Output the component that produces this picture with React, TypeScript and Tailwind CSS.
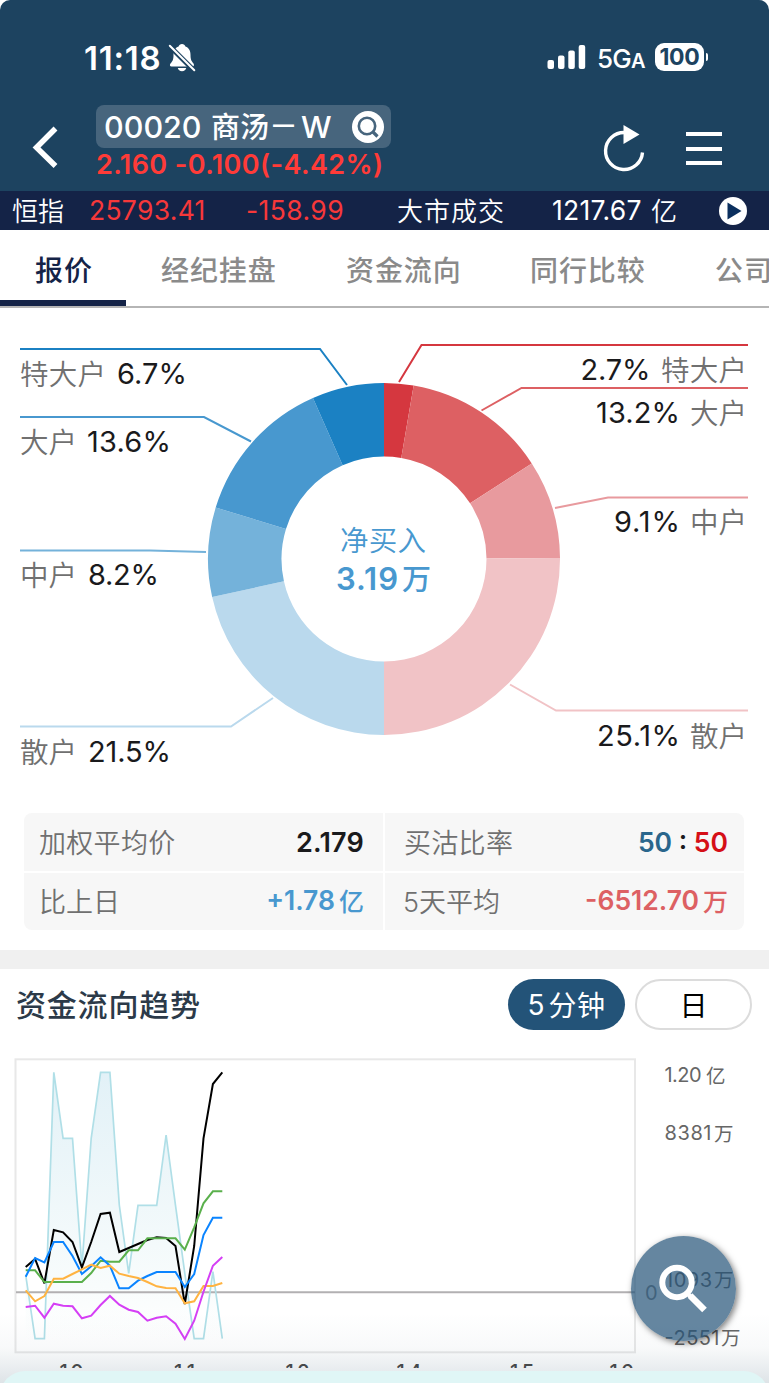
import React from "react";

const FONT = "Inter, 'Noto Sans CJK SC', sans-serif";

type TProps = {
  x: number;
  y: number;
  size: number;
  w?: number;
  fill?: string;
  weight?: number;
  children: string;
};

/** Chart label, optionally fitted to a given width. */
function Label({ x, y, size, w, fill = "#707070", weight = 400, children }: TProps) {
  return (
    <text x={x} y={y} fontSize={size} textLength={w} fill={fill} fontWeight={weight} fontFamily={FONT}>
      {children}
    </text>
  );
}

function StatusBar() {
  return (
    <div className="flex h-[105px] items-start pl-[84px] pr-[61px] pt-[38px] text-white">
      <span className="w-[84px] text-[33px] font-semibold leading-[40px] tracking-[0.8px]">11:18</span>
      <svg className="mt-[5px]" width="28" height="30" viewBox="0 0 28 30" fill="#fff">
        <path d="M14 1c1.700 0 3 1 3.400 2.500 3.700 1.300 5.100 4.600 5.100 8.200 0 5 1 6.500 3 8.700.8 1 .6 3.100-1 3.100H3.500c-1.700 0-2-2-1-3.100 2-2.200 3-3.700 3-8.700 0-3.600 1.400-6.900 5.100-8.200C11 2 12.300 1 14 1zM9.800 25h8.400c-.3 2-2 3.200-4.200 3.200S10.100 27 9.800 25z" />
        <path d="M1.500 3 26 27.500" stroke="#1d4360" strokeWidth="5" />
        <path d="M1.800 2.800 26.300 27.300" stroke="#fff" strokeWidth="2" strokeLinecap="round" />
      </svg>
      <div className="flex-1" />
      <svg className="mt-[6px]" width="40" height="27" viewBox="0 0 40 27" fill="#fff">
        <rect x="0.500" y="16" width="6.500" height="9" rx="2" />
        <rect x="11" y="11.500" width="6.500" height="13.500" rx="2" />
        <rect x="21.300" y="6.500" width="6.500" height="18.500" rx="2" />
        <rect x="31.700" y="1" width="6.500" height="24" rx="2" />
      </svg>
      <span className="ml-[10px] mt-[3px] w-[46px] whitespace-nowrap text-[26px] font-medium leading-[36px] tracking-[-0.8px]">
        5G<span className="text-[20px] font-semibold">A</span>
      </span>
      <div className="ml-[12px] mt-[5px] flex h-7 w-[49px] items-center justify-center rounded-[9px] bg-white text-[23px] font-bold tracking-[-0.3px] text-[#1d4360]">
        100
      </div>
      <div className="ml-[2px] mt-[15px] h-[8px] w-[2px] rounded-r-full bg-white" />
    </div>
  );
}

function TitleBar() {
  return (
    <div className="flex h-[86px] text-white">
      <svg className="ml-[30px] mt-[20px]" width="30" height="44" viewBox="0 0 30 44" fill="none">
        <path d="M25.500 3.500 6.500 22.500 25.500 41" stroke="#fff" strokeWidth="5.500" />
      </svg>
      <div className="ml-[36px] w-[295px]">
        <div className="flex h-[43px] items-center whitespace-nowrap rounded-[8px] bg-[#47657d] pl-[8px] pr-[7px] text-[30.500px] font-medium">
          <span className="w-[107px] tracking-[0px]">00020</span>
          <span className="pt-[2px] text-[29px] leading-[41px]">商汤</span>
          <span className="text-[29px]">－</span>
          <span className="ml-[3px]">W</span>
          <svg className="ml-auto shrink-0" width="32" height="32" viewBox="0 0 32 32" fill="none">
            <circle cx="16" cy="16" r="16" fill="#fff" />
            <circle cx="15" cy="15" r="8.200" stroke="#47657d" strokeWidth="2.600" />
            <path d="m20.500 20.500 5 5" stroke="#47657d" strokeWidth="3.200" />
          </svg>
        </div>
        <div className="whitespace-nowrap text-[27px] font-semibold leading-[34px] tracking-[0.4px] text-[#ff3b38]">
          2.160 -0.100(-4.42%)
        </div>
      </div>
      <svg className="ml-[211px] mt-[18px]" width="44" height="50" viewBox="0 0 44 50" fill="none">
        <path d="M22.500 9.500A18.500 18.500 0 1 0 40.500 29.500" stroke="#fff" strokeWidth="3.400" />
        <path d="M21.500 2v19l16-9.500z" fill="#fff" />
      </svg>
      <div className="ml-[40px] mt-[27px] flex h-[33px] w-[36px] flex-col justify-between">
        <div className="h-[4px] bg-white" />
        <div className="h-[4px] bg-white" />
        <div className="h-[4px] bg-white" />
      </div>
    </div>
  );
}

function Ticker() {
  return (
    <div className="flex h-[39px] items-center whitespace-nowrap bg-[#142347] pl-[12px] text-[26px] text-white">
      <span className="w-[77px] pt-[2px] font-[350]">恒指</span>
      <span className="w-[157px] text-[26.500px] tracking-[0.300px] text-[#f7383a]">25793.41</span>
      <span className="w-[151px] text-[26.500px] tracking-[0.400px] text-[#f7383a]">-158.99</span>
      <span className="w-[155px] pt-[2px] font-[350] tracking-[1px]">大市成交</span>
      <span className="w-[99px] text-[26.500px] tracking-[0.300px]">1217.67</span>
      <span className="w-[68px] pt-[2px] font-[350]">亿</span>
      <svg width="28" height="28" viewBox="0 0 28 28">
        <circle cx="14" cy="14" r="14" fill="#fff" />
        <path d="M8.500 5.500v17L22.500 14z" fill="#0b2f5e" />
      </svg>
    </div>
  );
}

function Tabs() {
  return (
    <div className="flex h-[78px] overflow-hidden whitespace-nowrap border-b-2 border-[#b5b5b5] text-[28px] font-medium leading-[82px] tracking-[0.9px] text-[#8a8a8a]">
      <div className="h-[76px] w-[126px] shrink-0 border-b-[6px] border-[#142347] pl-[35px] font-medium text-[#142347]">
        报价
      </div>
      <span className="ml-[35px] w-[185px] shrink-0">经纪挂盘</span>
      <span className="w-[184px] shrink-0">资金流向</span>
      <span className="w-[185px] shrink-0">同行比较</span>
      <span className="shrink-0">公司</span>
    </div>
  );
}

const CX = 384;
const CY = 251;

function arc(from: number, to: number) {
  const R = 176;
  const r = 102.5;
  const p = (rad: number, deg: number) => {
    const t = (deg * Math.PI) / 180;
    return `${(CX + rad * Math.sin(t)).toFixed(2)} ${(CY - rad * Math.cos(t)).toFixed(2)}`;
  };
  return `M${p(R, from)}A${R} ${R} 0 0 1 ${p(R, to)}L${p(r, to)}A${r} ${r} 0 0 0 ${p(r, from)}Z`;
}

const SLICES: [number, number, string][] = [
  [0, 9.7, "#d5373f"],
  [9.7, 57.1, "#dd6063"],
  [57.1, 89.7, "#e89a9e"],
  [89.7, 180, "#f1c3c6"],
  [180, 257.5, "#bad9ed"],
  [257.5, 287, "#74b2da"],
  [287, 336.2, "#4898cf"],
  [336.2, 360, "#1b81c3"],
];

const LEADERS: [string, string][] = [
  ["20,41 320,41 347,77", "#1b81c3"],
  ["20,109 204,109 251,133.500", "#4898cf"],
  ["20,242.500 150,242.500 206,244", "#74b2da"],
  ["20,418.500 231,418.500 273,390", "#bad9ed"],
  ["748,37 421.500,37 399,74", "#d5373f"],
  ["748,80 521.500,80 481.500,102.500", "#dd6063"],
  ["748,189.500 608,189.500 555,200", "#e89a9e"],
  ["748,402.500 556,402.500 510,376.500", "#f1c3c6"],
];

const INK = "#1a1a1c";

function Donut() {
  return (
    <svg className="block" width="769" height="505" viewBox="0 0 769 505">
      {SLICES.map(([a, b, c]) => (
        <path key={c} d={arc(a, b)} fill={c} />
      ))}
      {LEADERS.map(([p, c]) => (
        <polyline key={c} points={p} fill="none" stroke={c} strokeWidth="2" />
      ))}
      <Label x={20} y={77} size={28.5} w={86} weight={350}>特大户</Label>
      <Label x={117} y={76} size={29} w={70} fill={INK}>6.7%</Label>
      <Label x={20} y={145} size={28.5} w={57} weight={350}>大户</Label>
      <Label x={87} y={144} size={29} w={84} fill={INK}>13.6%</Label>
      <Label x={20} y={278} size={28.5} w={57} weight={350}>中户</Label>
      <Label x={88} y={277} size={29} w={71} fill={INK}>8.2%</Label>
      <Label x={20} y={455} size={28.5} w={57} weight={350}>散户</Label>
      <Label x={88} y={454} size={29} w={83} fill={INK}>21.5%</Label>

      <Label x={580.5} y={71.5} size={29} w={70} fill={INK}>2.7%</Label>
      <Label x={661} y={73} size={28.5} w={86} weight={350}>特大户</Label>
      <Label x={596} y={114.5} size={29} w={84} fill={INK}>13.2%</Label>
      <Label x={690} y={116} size={28.5} w={57} weight={350}>大户</Label>
      <Label x={614} y={224} size={29} w={66} fill={INK}>9.1%</Label>
      <Label x={690} y={225} size={28.5} w={57} weight={350}>中户</Label>
      <Label x={597} y={437.5} size={29} w={83} fill={INK}>25.1%</Label>
      <Label x={690} y={439} size={28.5} w={57} weight={350}>散户</Label>

      <Label x={340} y={243} size={28.5} w={86} fill="#4898cf" weight={350}>净买入</Label>
      <Label x={336} y={281.5} size={31} w={62} fill="#4898cf" weight={600}>3.19</Label>
      <Label x={402} y={282} size={29} fill="#4898cf" weight={500}>万</Label>
    </svg>
  );
}

function Stats() {
  const cell = "flex items-center justify-between bg-[#f7f7f7] whitespace-nowrap";
  return (
    <div className="ml-6 mr-[25px] grid h-[117px] grid-cols-2 grid-rows-2 gap-[2px] overflow-hidden rounded-[8px] text-[27px] text-[#707070]">
      <div className={cell + " pl-[15px] pr-[19px]"}>
        <span className="pt-[4px] font-[350] tracking-[0.3px]">加权平均价</span>
        <span className="pt-[2px] text-[27px] font-semibold tracking-[0.2px] text-[#1a1a1c]">2.179</span>
      </div>
      <div className={cell + " pl-[19px] pr-[16px]"}>
        <span className="pt-[4px] font-[350] tracking-[0.3px]">买沽比率</span>
        <span className="pt-[2px] text-[26.500px] font-semibold text-[#1a1a1c]">
          <span className="text-[#2a668c]">50</span> : <span className="text-[#d50f17]">50</span>
        </span>
      </div>
      <div className={cell + " pl-[15px] pr-[19px]"}>
        <span className="pt-[4px] font-[350]">比上日</span>
        <span className="flex items-center gap-[4px] text-[26.500px] font-semibold text-[#4898cf]">
          <span>+1.78</span>
          <span className="pt-[2px] text-[25px] font-medium">亿</span>
        </span>
      </div>
      <div className={cell + " pl-[18px] pr-[16px]"}>
        <span className="pt-[4px] font-[350]">5天平均</span>
        <span className="flex items-center gap-[4px] text-[26.500px] font-semibold text-[#dd6063]">
          <span>-6512.70</span>
          <span className="pt-[2px] text-[25px] font-medium">万</span>
        </span>
      </div>
    </div>
  );
}

function TrendHeader() {
  return (
    <div className="flex h-[89px] items-start pl-[16px] pr-[17px] pt-[10px]">
      <h2 className="flex-1 text-[30px] font-medium leading-[53px] tracking-[0.8px] text-[#2c3a49]">资金流向趋势</h2>
      <button className="flex h-[51px] w-[117px] items-center justify-center gap-[4px] rounded-full bg-[#235378] text-[28px] text-white">
        <span>5</span>
        <span className="pt-[2px] tracking-[0.5px]">分钟</span>
      </button>
      <button className="ml-[10px] flex h-[51px] w-[117px] items-center justify-center rounded-full border-2 border-[#dcdcdc] pt-[2px] text-[28px] text-black">
        日
      </button>
    </div>
  );
}

const SERIES: { color: string; values: number[] }[] = [
  { color: "#000000", values: [681, 657, 730, 570, 577, 606, 682, 606, 522, 518, 636, 624, 612, 600, 592, 594, 618, 792, 618, 295, 132, 97] },
  { color: "#5ab04c", values: [691, 691, 726, 726, 726, 726, 726, 699, 662, 665, 665, 631, 631, 595, 595, 595, 595, 629, 562, 490, 454, 454] },
  { color: "#0a84ff", values: [710, 654, 667, 606, 606, 648, 702, 679, 652, 677, 745, 745, 722, 708, 696, 696, 696, 741, 702, 585, 533, 533] },
  { color: "#ffb341", values: [751, 784, 768, 716, 716, 702, 688, 674, 684, 677, 701, 708, 714, 726, 739, 744, 745, 790, 784, 738, 738, 729] },
  { color: "#d53ff5", values: [801, 797, 833, 791, 797, 799, 835, 827, 795, 768, 794, 809, 816, 842, 833, 829, 851, 897, 842, 755, 677, 651] },
];
const AREA = [705, 896, 896, 97, 295, 295, 680, 295, 97, 97, 495, 700, 496, 496, 496, 285, 496, 700, 896, 896, 695, 896];

const toPoints = (values: number[]) =>
  values.map((v, i) => `${(25.7 + i * 9.36).toFixed(1)},${(v / 3 - 18).toFixed(1)}`).join(" ");

function TrendChart() {
  return (
    <svg className="block shrink-0" width="769" height="310" viewBox="0 0 769 310">
      <defs>
        <linearGradient id="area" x1="0" y1="14" x2="0" y2="281" gradientUnits="userSpaceOnUse">
          <stop offset="0" stopColor="#e2f1f7" />
          <stop offset="0.8" stopColor="#f8fcfc" />
          <stop offset="1" stopColor="#fff" />
        </linearGradient>
      </defs>
      <rect x="15.500" y="1.300" width="619.500" height="293" fill="none" stroke="#e8e8e8" strokeWidth="2" />
      <polygon points={`25.7,281 ${toPoints(AREA)} 222.3,281`} fill="url(#area)" />
      <path d="M16 234.300H635" stroke="#b2b0b2" strokeWidth="2" />
      <polyline points={toPoints(AREA)} fill="none" stroke="#b0dfe7" strokeWidth="1.700" />
      {SERIES.map((s) => (
        <polyline key={s.color} points={toPoints(s.values)} fill="none" stroke={s.color} strokeWidth="2" strokeMiterlimit="3" />
      ))}
      <Label x={664.5} y={24} size={20} w={37} fill="#666">1.20</Label>
      <Label x={706} y={24.5} size={19.5} fill="#666">亿</Label>
      <Label x={664.5} y={82} size={20} w={47} fill="#666">8381</Label>
      <Label x={714} y={82.5} size={19.5} fill="#666">万</Label>
      <Label x={645} y={241.5} size={20} fill="#888">0</Label>
      <Label x={665} y={229} size={20} w={47} fill="#666">1093</Label>
      <Label x={714} y={229} size={19.5} fill="#666">万</Label>
      <Label x={664.5} y={286.5} size={20} w={55} fill="#666">-2551</Label>
      <Label x={721} y={287} size={19.5} fill="#666">万</Label>
      <Label x={59.5} y={320.5} size={20} w={24} fill="#444" weight={500}>10</Label>
      <Label x={174} y={320.5} size={20} w={21} fill="#444" weight={500}>11</Label>
      <Label x={285.5} y={320.5} size={20} w={24} fill="#444" weight={500}>12</Label>
      <Label x={396.500} y={320.5} size={20} w={25} fill="#444" weight={500}>14</Label>
      <Label x={510} y={320.5} size={20} w={24} fill="#444" weight={500}>15</Label>
      <Label x={609.500} y={320.5} size={20} w={24} fill="#444" weight={500}>16</Label>
    </svg>
  );
}

export default function App() {
  return (
    <div
      className="relative h-[1383px] w-[769px] overflow-hidden bg-white"
      style={{ fontFamily: FONT }}
    >
      <div className="bg-white">
        <header className="rounded-t-[10px] bg-[#1d4360]">
          <StatusBar />
          <TitleBar />
        </header>
      </div>
      <Ticker />
      <Tabs />
      <Donut />
      <Stats />
      <div className="mt-5 h-[19px] bg-[#f0f0f0]" />
      <TrendHeader />
      <TrendChart />

      <div className="pointer-events-none absolute bottom-0 left-0 h-[70px] w-full bg-linear-to-b from-[#506e8200] via-[#506e820a] to-[#506e8230]" />
      <div className="absolute bottom-0 left-0 h-[12px] w-full overflow-hidden">
        <div className="h-[60px] rounded-[25px] bg-[#e0f6f6]" />
      </div>
      <button className="absolute left-[631px] top-[1236px] flex size-[105px] items-center justify-center rounded-full bg-[#235378]/70 shadow-[2px_2px_6px_rgba(0,0,0,0.5)]">
        <svg width="105" height="105" viewBox="0 0 105 105" fill="none">
          <circle cx="46" cy="46.500" r="14.700" stroke="#fff" strokeWidth="6" />
          <path d="m57 58 3 3" stroke="#fff" strokeWidth="4" />
          <path d="M59 59.500 73.500 74" stroke="#fff" strokeWidth="6.500" />
        </svg>
      </button>
    </div>
  );
}
